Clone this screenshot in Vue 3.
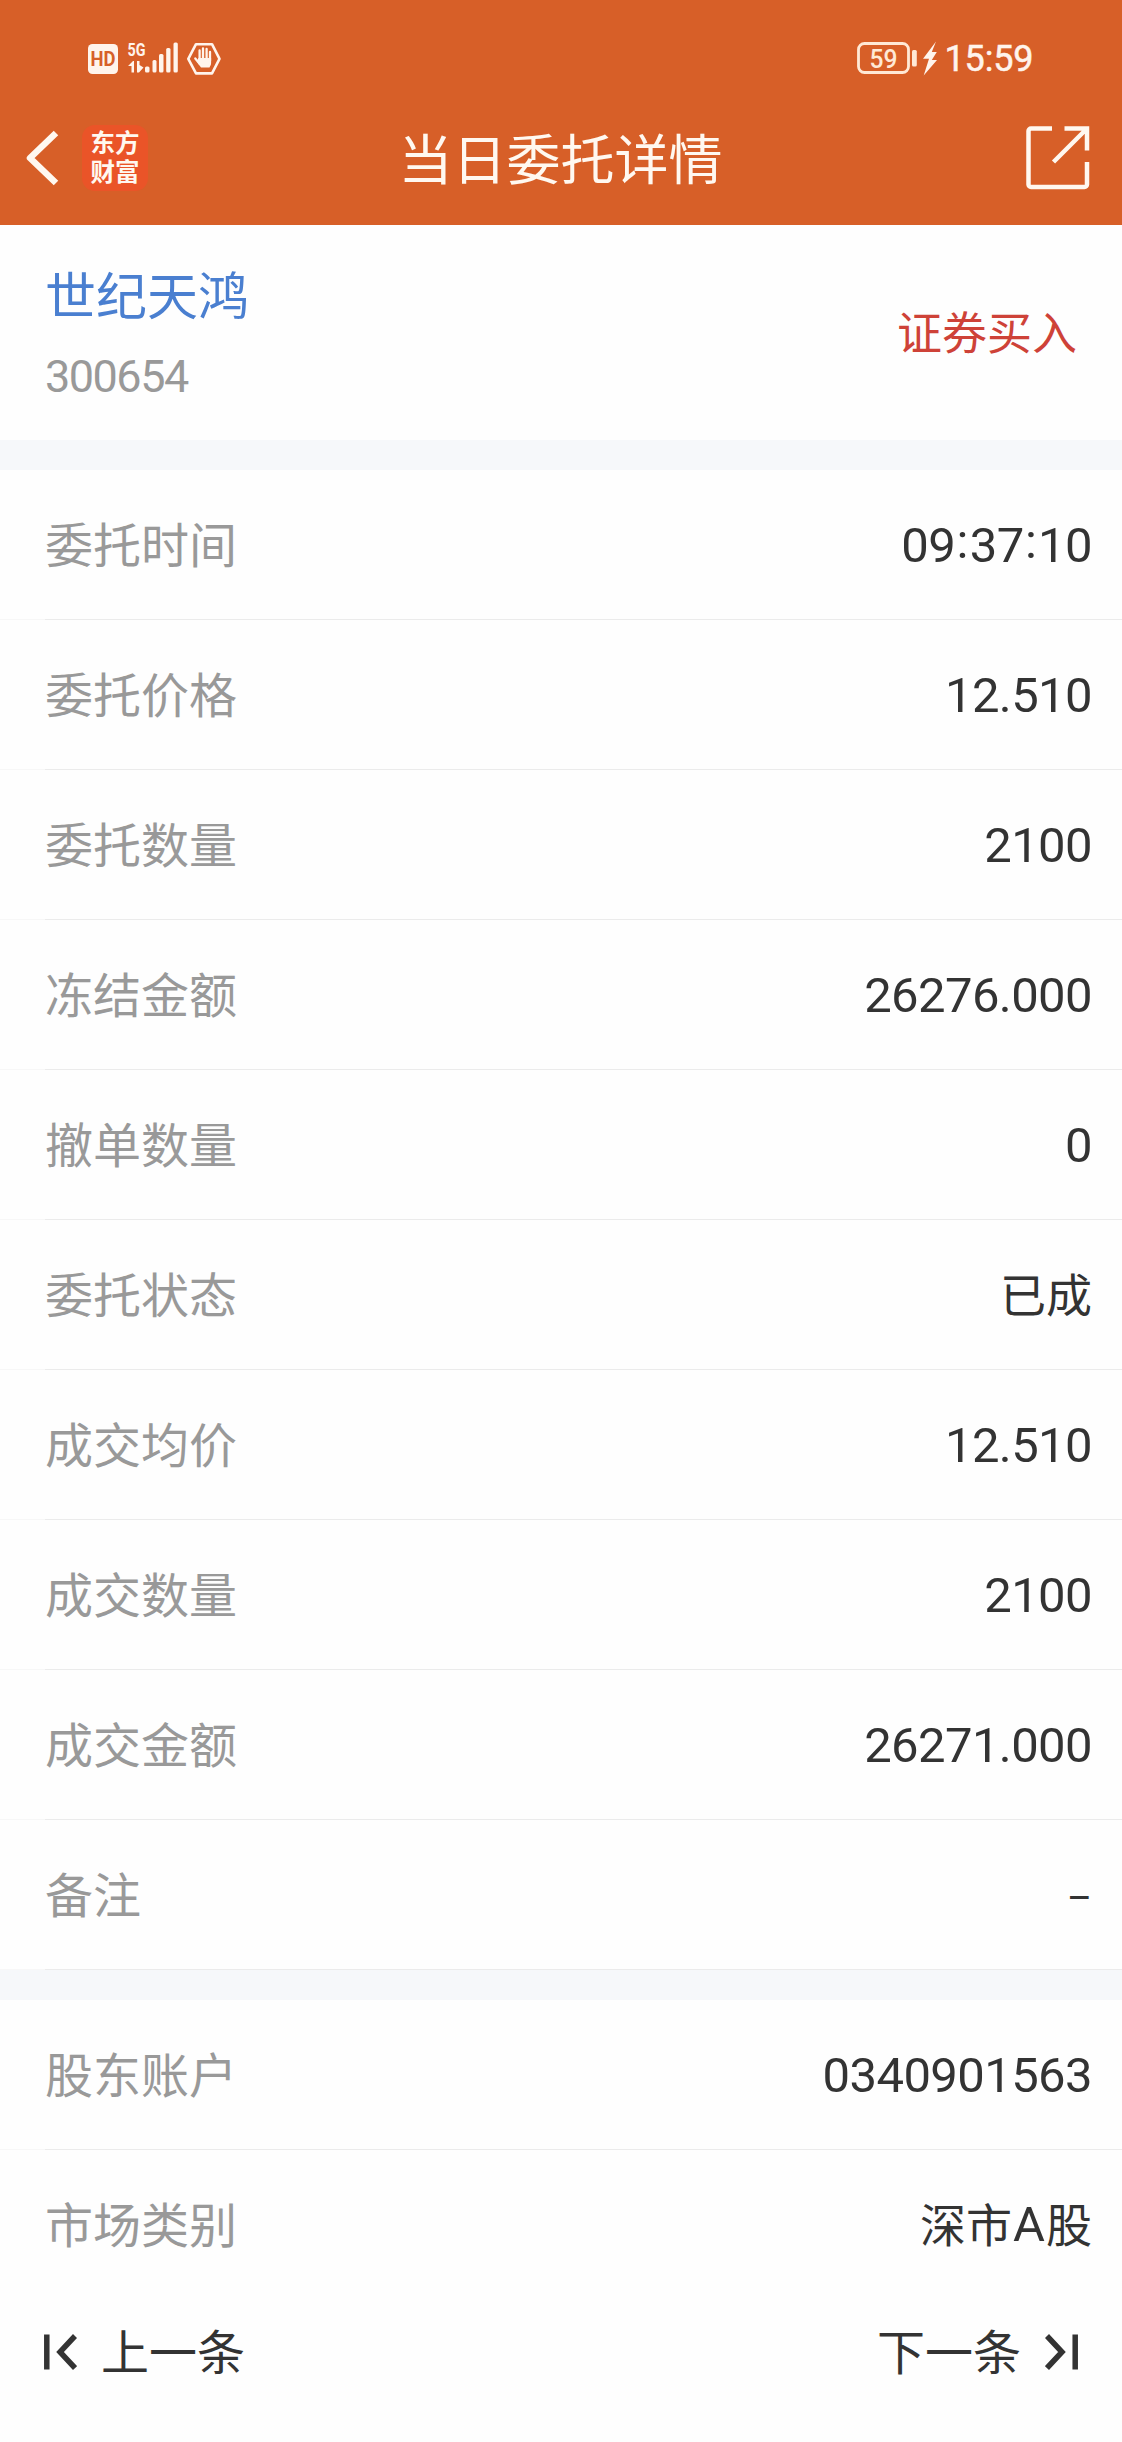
<script setup>
	import { ref } from 'vue';

	const stock = ref({
		name: '世纪天鸿',
		code: '300654',
		side: '证券买入',
	});

	const groups = ref([
		[
			{ label: '委托时间', value: '09:37:10' },
			{ label: '委托价格', value: '12.510' },
			{ label: '委托数量', value: '2100' },
			{ label: '冻结金额', value: '26276.000' },
			{ label: '撤单数量', value: '0' },
			{ label: '委托状态', value: '已成' },
			{ label: '成交均价', value: '12.510' },
			{ label: '成交数量', value: '2100' },
			{ label: '成交金额', value: '26271.000' },
			{ label: '备注', value: '–' },
		],
		[
			{ label: '股东账户', value: '0340901563' },
			{ label: '市场类别', value: '深市A股' },
		],
	]);

	// splits a value so Chinese text and colons can be sized on their own
	function parts(value) {
		return value.match(/[\u4e00-\u9fff]+|:|–|A|[^\u4e00-\u9fff:–A]+/g).map((text) => {
			let kind = 'latin';
			if (text === ':') kind = 'colon';
			else if (text === '–') kind = 'dash';
			else if (text === 'A') kind = 'letter';
			else if (/[\u4e00-\u9fff]/.test(text)) kind = 'han';
			return { text, kind };
		});
	}
</script>

<template>
	<div class="page">
		<header>
			<div class="status">
				<svg class="signal" width="190" height="46" viewBox="0 0 190 46">
					<rect x="8" y="6" width="30" height="30" rx="4.5" fill="#fff4ec" />
					<text x="10.5" y="27.8" class="hd" textLength="25" lengthAdjust="spacingAndGlyphs">HD</text>
					<text x="47.5" y="17.8" class="net" textLength="18" lengthAdjust="spacingAndGlyphs">5G</text>
					<g fill="#fff4ec">
						<path d="M48 28l5-5h1v11.500h-2.500V28z" />
						<path d="M57 23h2.500v4l4 2.500l-4.500 5H57z" />
						<rect x="65" y="28.500" width="4.500" height="6" rx="1.500" />
						<rect x="72.500" y="22" width="4" height="12.500" rx="1.500" />
						<rect x="79" y="16" width="4.500" height="18.500" rx="1.500" />
						<rect x="86.200" y="10" width="4.300" height="24.500" rx="1.500" />
						<rect x="93.500" y="4.500" width="4.300" height="30" rx="1.500" />
					</g>
					<path d="M116 6.200h16l7.500 14.700-7.500 14.500H116l-7.700-14.500z" fill="none" stroke="#fff4ec" stroke-width="2.600" stroke-linejoin="round" />
					<g fill="none" stroke="#fff4ec" stroke-width="2.300" stroke-linecap="round">
						<path d="M119.600 23V12.500M123 22V10.500M126.600 22V11M130 23V14M115.300 20.500l4.500 5.500" />
					</g>
					<path d="M118.400 20h12.700v5c0 2.400-1 3-1.600 4.500h-8.500c-1.500-2-3-4-4-6z" fill="#fff4ec" />
				</svg>
				<svg class="battery" width="182" height="46" viewBox="0 0 182 46">
					<rect x="3.500" y="5.500" width="50" height="29" rx="6" fill="none" stroke="#ffe9d6" stroke-width="2.800" />
					<rect x="57" y="12" width="4.800" height="16.500" rx="1.500" fill="#ffe9d6" />
					<text x="14.600" y="29.500" class="level" textLength="28" lengthAdjust="spacingAndGlyphs">59</text>
					<path d="M81 3.500L68 20.800h6L68.700 37.500 82 22h-5.200l5-8h-5z" fill="#fff4ec" />
					<text x="89.500" y="33" class="clock" textLength="89" lengthAdjust="spacing">15:59</text>
				</svg>
			</div>
			<div class="nav">
				<div class="side">
					<svg class="back" width="34" height="58" viewBox="0 0 34 58">
						<path d="M30 4L4 29l26 25" fill="none" stroke="#fff8f0" stroke-width="6.500" stroke-linejoin="round" />
					</svg>
					<div class="brand">东方<br>财富</div>
				</div>
				<h1>当日委托详情</h1>
				<div class="side end">
					<svg width="64" height="64" viewBox="0 0 64 64">
						<g fill="none" stroke="#fff8f0" stroke-width="4.500">
							<path d="M26 2.500H5a2.500 2.500 0 0 0-2.500 2.500v53.500A2.500 2.500 0 0 0 5 61h53.500a2.500 2.500 0 0 0 2.500-2.500V36" />
							<path d="M38.500 2.500H61V24.500M61 2.500L27.500 36" />
						</g>
					</svg>
				</div>
			</div>
		</header>

		<section class="stock">
			<div>
				<div class="name">{{ stock.name }}</div>
				<div class="code">{{ stock.code }}</div>
			</div>
			<div class="buy">{{ stock.side }}</div>
		</section>

		<ul v-for="(group, i) in groups" :key="i" class="group">
			<li v-for="row in group" :key="row.label">
				<span class="label">{{ row.label }}</span>
				<span class="value"><span v-for="(p, j) in parts(row.value)" :key="j" :class="p.kind">{{ p.text }}</span></span>
			</li>
		</ul>

		<footer>
			<a>
				<svg width="33" height="36" viewBox="0 0 33 36">
					<path d="M2.800 .500v35M31 2L16 18l15 16" fill="none" stroke="#333" stroke-width="5.500" />
				</svg>
				<span>上一条</span>
			</a>
			<a>
				<span>下一条</span>
				<svg width="33" height="36" viewBox="0 0 33 36">
					<path d="M30.200 .500v35M2 2l15 16L2 34" fill="none" stroke="#333" stroke-width="5.500" />
				</svg>
			</a>
		</footer>
	</div>
</template>

<style>
	body {
		margin: 0;
		background: #fefefe;
	}
</style>

<style scoped>
	.page {
		width: 1122px;
		height: 2442px;
		overflow: hidden;
		background: #fefefe;
		color: #333;
		font-family: Roboto, "Noto Sans CJK SC", sans-serif;
	}

	svg {
		display: block;
		flex: none;
	}

	header {
		height: 225px;
		background: #d75f28;
		color: #fff8f0;
	}

	.status {
		display: flex;
		justify-content: space-between;
		box-sizing: border-box;
		height: 92px;
		padding: 38px 85px 0 80px;
	}

	.hd {
		font: 700 20px Roboto, sans-serif;
		fill: #d75f28;
	}

	.net {
		font: 700 18px Roboto, sans-serif;
		fill: #fff4ec;
	}

	.level {
		font: 500 25.5px Roboto, sans-serif;
		fill: #ffe9d6;
	}

	.clock {
		font: 400 36px Roboto, sans-serif;
		fill: #fff4ec;
		stroke: #fff4ec;
		stroke-width: 0.5px;
	}

	.nav {
		display: flex;
		align-items: center;
		height: 132px;
	}

	.side {
		display: flex;
		align-items: center;
		box-sizing: border-box;
		width: 300px;
		padding-left: 26px;
	}

	.end {
		justify-content: flex-end;
		padding: 0 32px 0 0;
	}

	.brand {
		box-sizing: border-box;
		width: 66px;
		height: 66px;
		margin-left: 22px;
		padding-top: 2px;
		border-radius: 13px;
		background: #ea5428;
		font-family: "Noto Sans CJK SC", sans-serif;
		font-size: 24.5px;
		font-weight: 700;
		line-height: 29px;
		text-align: center;
	}

	h1 {
		flex: 1;
		margin: 0 1px 3px 0;
		font-family: "Noto Sans CJK SC", sans-serif;
		font-size: 54px;
		font-weight: 400;
		line-height: 80px;
		text-align: center;
		white-space: nowrap;
	}

	.stock {
		display: flex;
		justify-content: space-between;
		box-sizing: border-box;
		height: 215px;
		padding: 41px 45px 0;
	}

	.name {
		color: #4a7fd0;
		font-size: 51px;
		line-height: 64px;
	}

	.code {
		margin-top: 17px;
		color: #999;
		font-size: 45px;
		line-height: 60px;
		letter-spacing: -1.5px;
	}

	.buy {
		margin-top: 37px;
		color: #ce4238;
		font-size: 45px;
		line-height: 64px;
	}

	.group {
		margin: 0;
		padding: 0;
		border-top: 30px solid #f6f8fa;
		list-style: none;
	}

	.group li {
		display: flex;
		justify-content: space-between;
		align-items: center;
		box-sizing: border-box;
		height: 150px;
		padding: 3px 30px 0 45px;
		background: linear-gradient(to right, #f7f7f7 45px, #ebebeb 45px) bottom / 100% 1px no-repeat;
	}

	.group:last-of-type li:last-child {
		background: none;
	}

	.label {
		color: #999;
		font-size: 48px;
		line-height: 70px;
	}

	.value {
		padding-bottom: 2px;
		font-size: 49px;
		line-height: 70px;
		white-space: nowrap;
	}

	.latin {
		letter-spacing: -0.6px;
	}

	.han {
		font-size: 46px;
		vertical-align: -1px;
	}

	.letter {
		padding: 0 1px;
	}

	.colon {
		display: inline-block;
		width: 14.5px;
		text-align: center;
		line-height: 60px;
		vertical-align: 4px;
	}

	.dash {
		font-size: 38px;
		vertical-align: -1px;
	}

	footer {
		display: flex;
		justify-content: space-between;
		box-sizing: border-box;
		height: 142px;
		padding: 17px 44px 0;
	}

	footer a {
		display: flex;
		align-items: center;
		gap: 24px;
		height: 70px;
		font-size: 48px;
		line-height: 70px;
	}

	footer span {
		padding-top: 3px;
	}
</style>
